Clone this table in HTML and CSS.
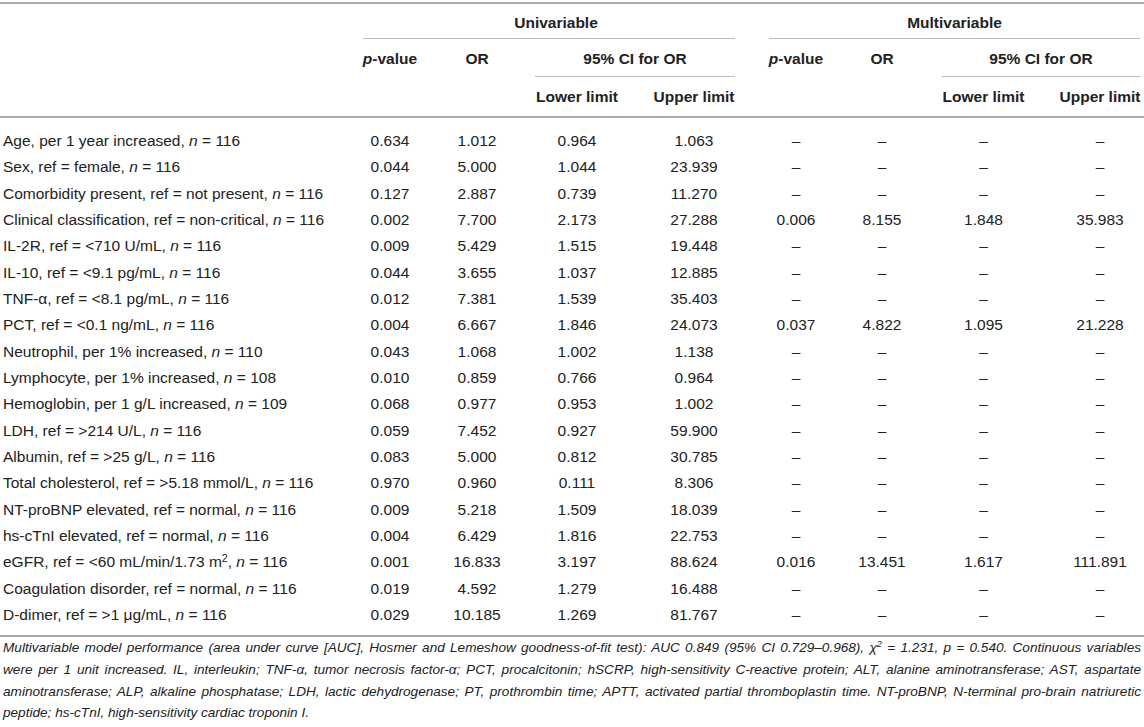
FILE: index.html
```html
<!DOCTYPE html>
<html lang="en">
<head>
    <meta charset="UTF-8">
    <title>Univariable and multivariable logistic regression</title>
    <link rel="stylesheet" href="styles.css">
</head>
<body>
    <div class="table-wrap">
        <table class="or-table">
            <colgroup>
                <col class="col-label">
                <col class="col-p">
                <col class="col-or">
                <col class="col-lower">
                <col class="col-upper">
                <col class="col-mp">
                <col class="col-mor">
                <col class="col-mlower">
                <col class="col-mupper">
            </colgroup>
            <thead>
                <tr class="head-top">
                    <th rowspan="3"></th>
                    <th colspan="4" class="group"><div class="rule rule-uni">Univariable</div></th>
                    <th colspan="4" class="group"><div class="rule rule-multi">Multivariable</div></th>
                </tr>
                <tr class="head-mid">
                    <th rowspan="2" class="top"><i>p</i>-value</th>
                    <th rowspan="2" class="top">OR</th>
                    <th colspan="2" class="group"><div class="rule rule-ci">95% CI for OR</div></th>
                    <th rowspan="2" class="top"><i>p</i>-value</th>
                    <th rowspan="2" class="top">OR</th>
                    <th colspan="2" class="group"><div class="rule rule-mci">95% CI for OR</div></th>
                </tr>
                <tr class="head-low">
                    <th>Lower limit</th>
                    <th>Upper limit</th>
                    <th>Lower limit</th>
                    <th>Upper limit</th>
                </tr>
            </thead>
            <tbody>
                <tr>
                    <td class="label">Age, per 1 year increased, <i>n</i> = 116</td>
                    <td>0.634</td><td>1.012</td><td>0.964</td><td>1.063</td>
                    <td>–</td><td>–</td><td>–</td><td>–</td>
                </tr>
                <tr>
                    <td class="label">Sex, ref = female, <i>n</i> = 116</td>
                    <td>0.044</td><td>5.000</td><td>1.044</td><td>23.939</td>
                    <td>–</td><td>–</td><td>–</td><td>–</td>
                </tr>
                <tr>
                    <td class="label">Comorbidity present, ref = not present, <i>n</i> = 116</td>
                    <td>0.127</td><td>2.887</td><td>0.739</td><td>11.270</td>
                    <td>–</td><td>–</td><td>–</td><td>–</td>
                </tr>
                <tr>
                    <td class="label">Clinical classification, ref = non-critical, <i>n</i> = 116</td>
                    <td>0.002</td><td>7.700</td><td>2.173</td><td>27.288</td>
                    <td>0.006</td><td>8.155</td><td>1.848</td><td>35.983</td>
                </tr>
                <tr>
                    <td class="label">IL-2R, ref = &lt;710 U/mL, <i>n</i> = 116</td>
                    <td>0.009</td><td>5.429</td><td>1.515</td><td>19.448</td>
                    <td>–</td><td>–</td><td>–</td><td>–</td>
                </tr>
                <tr>
                    <td class="label">IL-10, ref = &lt;9.1 pg/mL, <i>n</i> = 116</td>
                    <td>0.044</td><td>3.655</td><td>1.037</td><td>12.885</td>
                    <td>–</td><td>–</td><td>–</td><td>–</td>
                </tr>
                <tr>
                    <td class="label">TNF-α, ref = &lt;8.1 pg/mL, <i>n</i> = 116</td>
                    <td>0.012</td><td>7.381</td><td>1.539</td><td>35.403</td>
                    <td>–</td><td>–</td><td>–</td><td>–</td>
                </tr>
                <tr>
                    <td class="label">PCT, ref = &lt;0.1 ng/mL, <i>n</i> = 116</td>
                    <td>0.004</td><td>6.667</td><td>1.846</td><td>24.073</td>
                    <td>0.037</td><td>4.822</td><td>1.095</td><td>21.228</td>
                </tr>
                <tr>
                    <td class="label">Neutrophil, per 1% increased, <i>n</i> = 110</td>
                    <td>0.043</td><td>1.068</td><td>1.002</td><td>1.138</td>
                    <td>–</td><td>–</td><td>–</td><td>–</td>
                </tr>
                <tr>
                    <td class="label">Lymphocyte, per 1% increased, <i>n</i> = 108</td>
                    <td>0.010</td><td>0.859</td><td>0.766</td><td>0.964</td>
                    <td>–</td><td>–</td><td>–</td><td>–</td>
                </tr>
                <tr>
                    <td class="label">Hemoglobin, per 1 g/L increased, <i>n</i> = 109</td>
                    <td>0.068</td><td>0.977</td><td>0.953</td><td>1.002</td>
                    <td>–</td><td>–</td><td>–</td><td>–</td>
                </tr>
                <tr>
                    <td class="label">LDH, ref = &gt;214 U/L, <i>n</i> = 116</td>
                    <td>0.059</td><td>7.452</td><td>0.927</td><td>59.900</td>
                    <td>–</td><td>–</td><td>–</td><td>–</td>
                </tr>
                <tr>
                    <td class="label">Albumin, ref = &gt;25 g/L, <i>n</i> = 116</td>
                    <td>0.083</td><td>5.000</td><td>0.812</td><td>30.785</td>
                    <td>–</td><td>–</td><td>–</td><td>–</td>
                </tr>
                <tr>
                    <td class="label">Total cholesterol, ref = &gt;5.18 mmol/L, <i>n</i> = 116</td>
                    <td>0.970</td><td>0.960</td><td>0.111</td><td>8.306</td>
                    <td>–</td><td>–</td><td>–</td><td>–</td>
                </tr>
                <tr>
                    <td class="label">NT-proBNP elevated, ref = normal, <i>n</i> = 116</td>
                    <td>0.009</td><td>5.218</td><td>1.509</td><td>18.039</td>
                    <td>–</td><td>–</td><td>–</td><td>–</td>
                </tr>
                <tr>
                    <td class="label">hs-cTnI elevated, ref = normal, <i>n</i> = 116</td>
                    <td>0.004</td><td>6.429</td><td>1.816</td><td>22.753</td>
                    <td>–</td><td>–</td><td>–</td><td>–</td>
                </tr>
                <tr>
                    <td class="label">eGFR, ref = &lt;60 mL/min/1.73 m<sup>2</sup>, <i>n</i> = 116</td>
                    <td>0.001</td><td>16.833</td><td>3.197</td><td>88.624</td>
                    <td>0.016</td><td>13.451</td><td>1.617</td><td>111.891</td>
                </tr>
                <tr>
                    <td class="label">Coagulation disorder, ref = normal, <i>n</i> = 116</td>
                    <td>0.019</td><td>4.592</td><td>1.279</td><td>16.488</td>
                    <td>–</td><td>–</td><td>–</td><td>–</td>
                </tr>
                <tr>
                    <td class="label">D-dimer, ref = &gt;1 μg/mL, <i>n</i> = 116</td>
                    <td>0.029</td><td>10.185</td><td>1.269</td><td>81.767</td>
                    <td>–</td><td>–</td><td>–</td><td>–</td>
                </tr>
            </tbody>
        </table>

        <div class="footnote">
            <span class="fn-line">Multivariable model performance (area under curve [AUC], Hosmer and Lemeshow goodness-of-fit test): AUC 0.849 (95% CI 0.729–0.968), χ<sup>2</sup> = 1.231, <i class="up">p</i> = 0.540. Continuous variables</span>
            <span class="fn-line">were per 1 unit increased. IL, interleukin; TNF-α, tumor necrosis factor-α; PCT, procalcitonin; hSCRP, high-sensitivity C-reactive protein; ALT, alanine aminotransferase; AST, aspartate</span>
            <span class="fn-line">aminotransferase; ALP, alkaline phosphatase; LDH, lactic dehydrogenase; PT, prothrombin time; APTT, activated partial thromboplastin time. NT-proBNP, N-terminal pro-brain natriuretic</span>
            <span class="fn-line fn-last">peptide; hs-cTnI, high-sensitivity cardiac troponin I.</span>
        </div>
    </div>
</body>
</html>
```

FILE: styles.css
```css
:root {
    --text: #222;
    --rule-strong: #a9a9a9;
    --rule-light: #bdbdbd;
}

* {
    margin: 0;
    padding: 0;
    box-sizing: border-box;
}

body {
    width: 1144px;
    font-family: 'Liberation Sans', Arial, sans-serif;
    color: var(--text);
    background: white;
    padding-top: 2px;
}

/* Table */
.or-table {
    width: 1144px;
    table-layout: fixed;
    border-collapse: collapse;
    border-top: 2px solid var(--rule-strong);
    font-size: 15.5px;
}

.col-label { width: 331px; }
.col-p { width: 118px; }
.col-or { width: 56px; }
.col-lower { width: 144px; }
.col-upper { width: 90px; }
.col-mp { width: 114px; }
.col-mor { width: 58px; }
.col-mlower { width: 145px; }
.col-mupper { width: 88px; }

thead {
    border-bottom: 2px solid var(--rule-strong);
}

th {
    font-weight: bold;
    text-align: center;
    white-space: nowrap;
}

.head-top th {
    padding-top: 4px;
    line-height: 30px;
}

.head-mid th {
    padding-top: 2px;
    line-height: 35px;
}

.head-mid th.top {
    vertical-align: top;
}

.head-low th {
    line-height: 39px;
}

.rule {
    border-bottom: 1px solid var(--rule-light);
}

.rule-uni {
    margin: 0 4px 0 32px;
    padding-left: 14px;
}

.rule-multi {
    margin: 0 4px 0 30px;
}

.rule-ci {
    margin: 0 4px 0 30px;
}

.rule-mci {
    margin: 0 4px 0 31px;
}

tbody {
    border-bottom: 2px solid var(--rule-strong);
}

td {
    text-align: center;
    line-height: 26.33px;
    white-space: nowrap;
}

td.label {
    text-align: left;
    padding-left: 3px;
}

tbody tr:first-child td {
    padding-top: 10px;
}

tbody tr:last-child td {
    padding-bottom: 7px;
}

sup {
    font-size: 0.68em;
    line-height: 0;
    vertical-align: 0.5em;
}

/* Footnote */
.footnote {
    padding: 0 3px;
    font-size: 13.6px;
    font-style: italic;
    line-height: 21.7px;
    text-align: justify;
}

.fn-line {
    display: block;
    text-align-last: justify;
}

.fn-line.fn-last {
    text-align-last: left;
}
```
